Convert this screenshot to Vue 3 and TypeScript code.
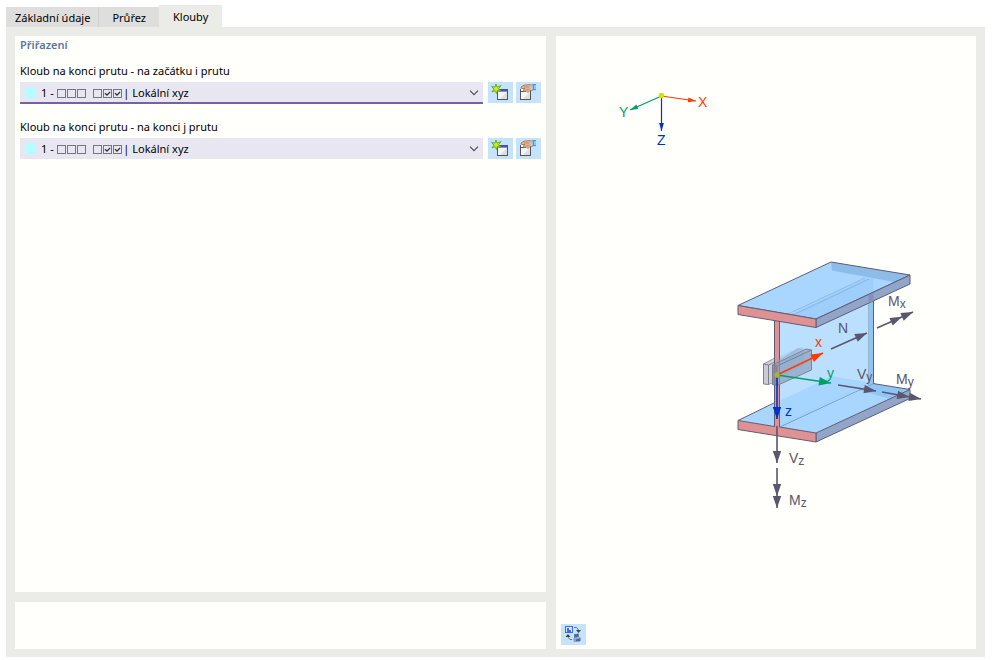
<script setup lang="ts">
import { ref } from 'vue'

interface HingeField {
  id: string
  label: string
  focused: boolean
}

interface Arrow {
  from: [number, number]
  to: [number, number]
  color: string
  double?: boolean
  small?: boolean
}

interface Label {
  x: number
  y: number
  text: string
  sub?: string
  color: string
}

const tabs = ['Základní údaje', 'Průřez', 'Klouby']
const activeTab = ref('Klouby')

const fields: HingeField[] = [
  { id: 'hinge-start', label: 'Kloub na konci prutu - na začátku i prutu', focused: true },
  { id: 'hinge-end', label: 'Kloub na konci prutu - na konci j prutu', focused: false },
]

// Em and thin spaces leave room for the six release boxes drawn over the option.
const optionText = '1 -' + '\u2003'.repeat(6) + '\u2009\u2009' + '| Lokální xyz'

const releases = [
  { x: 0, on: false },
  { x: 10, on: false },
  { x: 20, on: false },
  { x: 36, on: false },
  { x: 46, on: true },
  { x: 56, on: true },
]

const RED = '#ff3a00'
const GREEN = '#00a068'
const BLUE = '#0032c8'
const GREY = '#5a566c'

const globalAxes: Arrow[] = [
  { from: [661.5, 96], to: [696, 101], color: RED, small: true },
  { from: [661.5, 96], to: [630, 110], color: GREEN, small: true },
  { from: [661.5, 96], to: [661.5, 131], color: BLUE, small: true },
]

const arrows: Arrow[] = [
  { from: [777, 426], to: [777, 463], color: GREY },
  { from: [777, 468], to: [777, 508], color: GREY, double: true },
  { from: [831, 349], to: [867, 333], color: GREY },
  { from: [877, 328], to: [913, 312], color: GREY, double: true },
  { from: [838, 385], to: [876, 391], color: GREY },
  { from: [882, 392], to: [921, 399], color: GREY, double: true },
  { from: [777, 375], to: [823, 353], color: RED },
  { from: [777, 375], to: [831, 383], color: GREEN },
  { from: [777, 375], to: [777, 419], color: BLUE },
]

const labels: Label[] = [
  { x: 698, y: 107, text: 'X', color: RED },
  { x: 619, y: 117, text: 'Y', color: GREEN },
  { x: 657, y: 145, text: 'Z', color: BLUE },
  { x: 838, y: 333, text: 'N', color: GREY },
  { x: 888, y: 306, text: 'M', sub: 'x', color: GREY },
  { x: 857, y: 379, text: 'V', sub: 'y', color: GREY },
  { x: 896, y: 384, text: 'M', sub: 'y', color: GREY },
  { x: 789, y: 463, text: 'V', sub: 'z', color: GREY },
  { x: 789, y: 505, text: 'M', sub: 'z', color: GREY },
  { x: 815, y: 347, text: 'x', color: RED },
  { x: 827, y: 378, text: 'y', color: GREEN },
  { x: 785, y: 416, text: 'z', color: BLUE },
]

function head(a: Arrow, back = 0): string {
  const dx = a.to[0] - a.from[0]
  const dy = a.to[1] - a.from[1]
  const len = Math.hypot(dx, dy)
  const ux = dx / len
  const uy = dy / len
  const l = a.small ? 8 : 12
  const w = a.small ? 2.4 : 4.2
  const tx = a.to[0] - ux * back
  const ty = a.to[1] - uy * back
  const bx = tx - ux * l
  const by = ty - uy * l
  return `${tx},${ty} ${bx - uy * w},${by + ux * w} ${bx + uy * w},${by - ux * w}`
}
</script>

<template>
  <main class="dialog">
    <nav class="tabs" role="tablist">
      <button
        v-for="tab in tabs"
        :key="tab"
        type="button"
        role="tab"
        class="tab"
        :class="{ active: tab === activeTab }"
        :aria-selected="tab === activeTab"
        @click="activeTab = tab"
      >{{ tab }}</button>
    </nav>

    <div class="frame">
      <div class="left">
        <section class="panel assign">
          <h2>Přiřazení</h2>
          <div v-for="field in fields" :key="field.id" class="field">
            <label :for="field.id">{{ field.label }}</label>
            <div class="row">
              <div class="combo" :class="{ focused: field.focused }">
                <select :id="field.id">
                  <option>{{ optionText }}</option>
                </select>
                <span class="swatch"></span>
                <svg class="releases" width="65" height="9" viewBox="0 0 65 9" fill="none">
                  <g v-for="r in releases" :key="r.x">
                    <rect :x="r.x + 0.5" y="0.5" width="8" height="8" stroke="#77767c" />
                    <path v-if="r.on" :d="`M${r.x + 2} 4.300 ${r.x + 4} 6.200 ${r.x + 7} 3`" stroke="#333" stroke-width="1.300" />
                  </g>
                </svg>
                <svg class="chevron" width="10" height="6" viewBox="0 0 10 6">
                  <path d="M1 0.7 5 4.7 9 0.7" fill="none" stroke="#505050" stroke-width="1.2" />
                </svg>
              </div>
              <button type="button" class="tool" aria-label="Nový">
                <svg width="25" height="21" viewBox="0 0 25 21">
                  <rect x="9.5" y="7.5" width="10" height="10" fill="#f4f4f4" stroke="#555" />
                  <path d="M12 17 19 10V17Z" fill="#dedede" />
                  <rect x="12" y="7" width="8" height="2" fill="#4646ee" />
                  <path d="M9 7.5H20M9 9.5H20" stroke="#555" stroke-width=".6" />
                  <path d="M8 2 9.1 5 13 3.6 10.4 6.8 13 9 9.5 8.6 8.6 11.6 7.2 8.6 4 10 5.9 7 3.6 4.6 7 5Z" fill="#c8f000" stroke="#4f9c38" stroke-width=".8" />
                </svg>
              </button>
              <button type="button" class="tool" aria-label="Upravit">
                <svg width="25" height="21" viewBox="0 0 25 21">
                  <rect x="4.5" y="7.5" width="10" height="10" fill="#f4f4f4" stroke="#555" />
                  <path d="M7 17 14 10V17Z" fill="#dedede" />
                  <rect x="5" y="7" width="5" height="2" fill="#fff" />
                  <path d="M4.5 9.5H10" stroke="#555" />
                  <path d="M5 5 8 3.2 14 2.5 17 4V8L14 8.5 12 10.5 10.5 9 8 9.5 7 8 9 6.5 5.5 6.5Z" fill="#e5b48c" stroke="#94705c" stroke-width=".8" />
                  <path d="M8 5H13M10 7.5H13" stroke="#b98767" stroke-width=".8" />
                  <path d="M15 3 17 2H20V8L16 8.5Z" fill="#4b96df" />
                  <path d="M16 3V8" stroke="#dceeff" />
                  <path d="M18 3H20V7H18Z" fill="#91c4f3" />
                </svg>
              </button>
            </div>
          </div>
        </section>
        <section class="panel note"></section>
      </div>

      <section class="panel preview">
        <svg class="scene" viewBox="556 36 420 613" role="img" aria-label="Osy prutu a vnitřní síly">
          <g v-for="(a, i) in globalAxes" :key="'g' + i" :fill="a.color">
            <line :x1="a.from[0]" :y1="a.from[1]" :x2="a.to[0]" :y2="a.to[1]" :stroke="a.color" stroke-width="1.2" />
            <polygon :points="head(a)" />
          </g>
          <circle cx="661.5" cy="95.5" r="2.8" fill="#dce000" />

          <g stroke-linejoin="round">
            <!-- bottom flange -->
            <path d="M738 420.5 831 376.5 910 389.5 816 433Z" fill="#a9d6ff" />
            <path d="M873 383.5 910 389.5V398L895 400 858 390Z" fill="#8fc6f8" />
            <path d="M779.5 427 873 383.5" stroke="#526d8e" stroke-width=".9" />
            <path d="M775 427 868 383M831 376.5 873 383.5" stroke="#789fc8" stroke-width=".6" opacity=".6" />
            <path d="M816 433 910 389.5V398.5L816 442Z" fill="#91a5c8" stroke="#605c76" />
            <path d="M738 420.5 774 403M873 383.5 910 389.5" fill="none" stroke="#605c76" />
            <path d="M738 420.5 774.5 426.5H779.5L816 433V442L738 429.5Z" fill="#df9293" />
            <path d="M774.5 426.5 738 420.5V429.5L816 442V433L779.5 427" fill="none" stroke="#605c76" />

            <!-- back plate -->
            <path d="M763.5 364 800 347 804 348V366L768.5 384H763.5Z" fill="#b5bac7" fill-opacity=".7" />
            <path d="M763.5 364 768.5 365V384.5L763.5 384Z" fill="#cbcad5" stroke="#757484" stroke-width=".9" />
            <path d="M763.5 364 774 358.5M768.5 365 774 362.5M768.5 384.5 774 382" fill="none" stroke="#757484" stroke-width=".8" />

            <!-- web -->
            <path d="M779.5 320 873.5 277V383.5L779.5 427Z" fill="#a6d5ff" fill-opacity=".76" />
            <path d="M868.5 279 873.5 277V383.5L868.5 386Z" fill="#82b6e9" fill-opacity=".65" />
            <path d="M868.5 279V386" stroke="#8aaed2" stroke-width=".8" />
            <path d="M873.5 301V384" stroke="#605c76" />
            <path d="M774.5 320H779.5V427H774.5Z" fill="#df9293" />
            <path d="M774.5 320V427M779.5 321V427" stroke="#605c76" />

            <!-- top flange -->
            <path d="M738 305.5 831 262 910 275 816 319Z" fill="#a9d6ff" />
            <path d="M831 262 910 275V280L902 283.5 832 270.5Z" fill="#8dbce8" />
            <path d="M792 314 866 278.5H873.5V292L816 319Z" fill="#94c8fa" fill-opacity=".55" />
            <path d="M788 314 865 278M793 315 869 279" stroke="#769ac3" stroke-width=".7" opacity=".7" />
            <path d="M738 305.5 831 262 910 275 816 319Z" fill="none" stroke="#605c76" />
            <path d="M816 319 910 275V284L816 327.5Z" fill="#91a5c8" stroke="#605c76" />
            <path d="M868.5 295V303L873.5 301V293Z" fill="#7f91bd" />
            <path d="M738 305.5 816 319V327.5L738 314.5Z" fill="#df9293" stroke="#605c76" />

            <!-- front plate -->
            <path d="M778 360.5 798 348 803 349 778 362Z" fill="#8faac6" fill-opacity=".55" />
            <path d="M772.5 365 806 349 811.5 350V370L777 385.5 772.5 384.5Z" fill="#8aa0be" fill-opacity=".7" stroke="#777c8d" stroke-width=".9" />
            <path d="M772.5 365 777 366V385.5L772.5 384.5Z" fill="#8a6d79" fill-opacity=".45" stroke="#777c8d" stroke-width=".8" />
            <path d="M777 366 811.5 350" stroke="#777c8d" stroke-width=".9" />
          </g>

          <g v-for="(a, i) in arrows" :key="i" :fill="a.color">
            <line :x1="a.from[0]" :y1="a.from[1]" :x2="a.to[0]" :y2="a.to[1]" :stroke="a.color" stroke-width="1.6" />
            <polygon :points="head(a)" />
            <polygon v-if="a.double" :points="head(a, 12)" />
          </g>
          <circle cx="777" cy="375" r="2.7" fill="#aab52d" />

          <text v-for="(l, i) in labels" :key="'t' + i" :x="l.x" :y="l.y" :fill="l.color">{{ l.text }}<tspan v-if="l.sub" class="sub" dy="2">{{ l.sub }}</tspan></text>
        </svg>

        <button type="button" class="tool switch" aria-label="Přepnout zobrazení">
          <svg width="25" height="21" viewBox="0 0 25 21">
            <rect x="4.5" y="2.5" width="7" height="6" fill="#dce8ff" stroke="#4169e1" />
            <path d="M6 8V4H8V6H10V8Z" fill="#4169e1" />
            <path d="M13 3.5H15.500L17.500 6" fill="none" stroke="#777" />
            <path d="M15 6H20L17.5 9Z" fill="#444" />
            <path d="M11 15.5H9L7 13" fill="none" stroke="#777" />
            <path d="M4.5 13 7 10 9.5 13Z" fill="#444" />
            <path d="M13 10 18 9.5V13L13 14Z" fill="#5f7fb4" />
            <path d="M14 11 17 10.5V12.500L14 13Z" fill="#41619c" />
            <path d="M12 14.5 19 13 20 14V16.500L18 18H13Z" fill="#8ea0bd" />
            <path d="M15 15.5 19 14.5V17H15Z" fill="#4768a0" />
          </svg>
        </button>
      </section>
    </div>
  </main>
</template>

<style>
body {
  background: #fff;
}
</style>

<style scoped>
.dialog {
  box-sizing: border-box;
  display: flex;
  flex-direction: column;
  min-height: 100vh;
  padding: 5px 7px 3px 6px;
  font: 11px/16px "Noto Sans", "DejaVu Sans", sans-serif;
  color: #000;
}

.tabs {
  display: flex;
  align-items: flex-end;
  height: 22px;
}

.tab {
  height: 20px;
  padding: 2px 13px 0;
  border: 0;
  background: #dededc;
  font: inherit;
  color: inherit;
}

.tab:first-child {
  padding: 2px 8px 0 9px;
  border-right: 1px solid #d0d0ce;
}

.tab.active {
  height: 22px;
  padding: 2px 14px 0;
  background: #ebece8;
}

.frame {
  flex: 1;
  display: grid;
  grid-template-columns: 531fr 420fr;
  gap: 10px;
  padding: 9px 9px 8px;
  background: #ebece8;
}

.left {
  display: flex;
  flex-direction: column;
  gap: 10px;
  min-width: 0;
}

.panel {
  background: #fffffb;
}

.assign {
  flex: 1;
  padding: 1px 5px;
}

.note {
  height: 47px;
}

h2 {
  margin: 0 0 10px;
  font-size: 11px;
  line-height: 16px;
  font-weight: 600;
  color: #5b769c;
}

.field {
  margin-bottom: 17px;
}

.field label {
  display: block;
  line-height: 16px;
  margin-bottom: 3px;
}

.row {
  display: flex;
  gap: 3px;
  height: 20px;
}

.combo {
  flex: 1;
  display: grid;
  align-items: center;
  height: 21px;
  margin-right: 2px;
  background: #e8e7f1;
}

.combo > * {
  grid-area: 1 / 1;
}

.combo.focused {
  box-shadow: inset 0 -1px #7462a6, 0 1px #7462a6;
}

select {
  appearance: none;
  width: 100%;
  height: 21px;
  padding: 0 24px 0 21px;
  border: 0;
  outline: 0;
  background: transparent;
  font: inherit;
  color: inherit;
}

.swatch {
  width: 11px;
  height: 11px;
  margin-left: 5px;
  background: #b3ffff;
  pointer-events: none;
}

.releases {
  margin: 2px 0 0 37px;
  pointer-events: none;
}

.chevron {
  justify-self: end;
  margin-right: 4px;
  pointer-events: none;
}

.tool {
  width: 25px;
  height: 21px;
  padding: 0;
  border: 0;
  background: #c5e3fb;
}

.tool svg {
  display: block;
}

.preview {
  position: relative;
  display: flex;
}

.scene {
  width: 100%;
  height: 100%;
}

.scene text {
  font: 14px "Liberation Sans", sans-serif;
}

.scene .sub {
  font-size: 12px;
}

.switch {
  position: absolute;
  left: 5px;
  bottom: 4px;
}
</style>
